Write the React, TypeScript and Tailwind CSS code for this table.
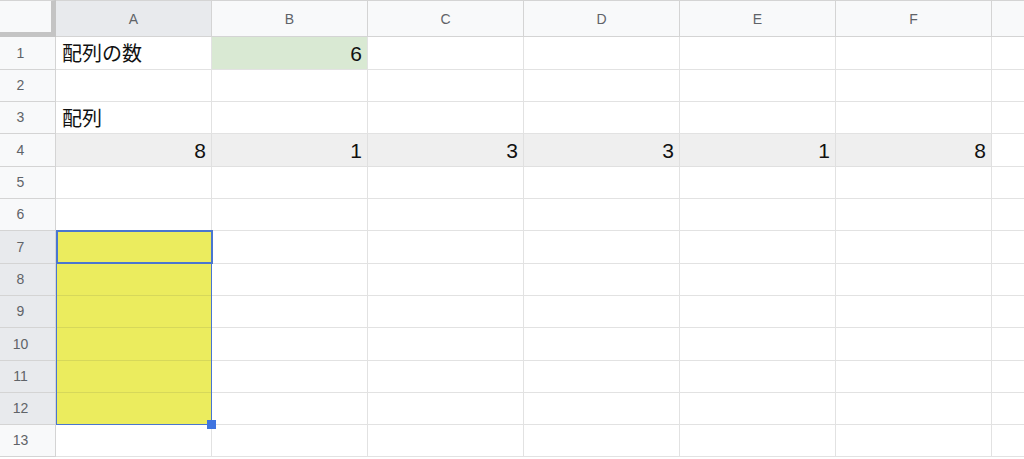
const COLS = ["A", "B", "C", "D", "E", "F"];

type Row = {
  n: number;
  h: string;
  cells: (string | null)[];
};

// row heights follow the gridlines of the sheet (33/32 px alternating)
const ROWS: Row[] = [
  { n: 1, h: "h-[33px]", cells: ["配列の数", "6", null, null, null, null] },
  { n: 2, h: "h-[32px]", cells: [null, null, null, null, null, null] },
  { n: 3, h: "h-[32px]", cells: ["配列", null, null, null, null, null] },
  { n: 4, h: "h-[33px]", cells: ["8", "1", "3", "3", "1", "8"] },
  { n: 5, h: "h-[32px]", cells: [null, null, null, null, null, null] },
  { n: 6, h: "h-[32px]", cells: [null, null, null, null, null, null] },
  { n: 7, h: "h-[33px]", cells: [null, null, null, null, null, null] },
  { n: 8, h: "h-[32px]", cells: [null, null, null, null, null, null] },
  { n: 9, h: "h-[32px]", cells: [null, null, null, null, null, null] },
  { n: 10, h: "h-[33px]", cells: [null, null, null, null, null, null] },
  { n: 11, h: "h-[32px]", cells: [null, null, null, null, null, null] },
  { n: 12, h: "h-[32px]", cells: [null, null, null, null, null, null] },
  { n: 13, h: "h-[32px]", cells: [null, null, null, null, null, null] },
];

const isNumber = (v: string) => /^\d+$/.test(v);

function cellBg(row: number, col: number) {
  if (row === 1 && col === 1) return "bg-[#d9e9d3] border-[#e2e2e2]";
  if (row === 4) return "bg-[#efefef] border-[#e0e0e0]";
  if (col === 0 && row >= 7 && row <= 12) return "bg-[#ebec5e] border-[#d6d85a]";
  return "bg-white border-[#e2e2e2]";
}

function Cell({ row, col, value }: { row: number; col: number; value: string | null }) {
  const num = value !== null && isNumber(value);
  return (
    <div
      className={`flex items-center overflow-hidden border-r border-b ${cellBg(row, col)} ${
        num ? "justify-end pr-[5px]" : "justify-start pl-[6px]"
      }`}
    >
      {value !== null &&
        (num ? (
          <span className="pt-[1px] text-[21px] leading-[22px] text-[#111]">{value}</span>
        ) : (
          <span className="font-['Noto_Sans_CJK_JP',sans-serif] text-[20px] leading-[22px] text-[#111]">
            {value}
          </span>
        ))}
    </div>
  );
}

export default function App() {
  return (
    <div className="relative h-[459px] w-[1024px] overflow-hidden bg-white font-['Liberation_Sans','Noto_Sans_CJK_JP',sans-serif]">
      <div className="grid grid-cols-[56px_repeat(6,156px)_1fr]">
        {/* header row */}
        <div className="h-[37px] border-t border-t-[#d4d4d4] border-r-[5px] border-b-[5px] border-r-[#c4c4c4] border-b-[#c4c4c4] bg-[#f8f9fa]" />
        {COLS.map((c) => (
          <div
            key={c}
            className={`flex h-[37px] items-center justify-center border-t border-r border-b border-[#d4d4d4] pt-[2px] text-[14px] text-[#5f6368] ${
              c === "A" ? "bg-[#e8eaed]" : "bg-[#f8f9fa]"
            }`}
          >
            {c}
          </div>
        ))}
        <div className="h-[37px] border-t border-b border-[#d4d4d4] bg-[#f8f9fa]" />

        {/* body rows */}
        {ROWS.map((r) => (
          <div key={r.n} className="contents">
            <div
              className={`flex ${r.h} items-center justify-center border-r border-b border-[#d4d4d4] pr-[14px] text-[14px] text-[#5f6368] ${
                r.n >= 7 && r.n <= 12 ? "bg-[#e8eaed]" : "bg-[#f8f9fa]"
              }`}
            >
              {r.n}
            </div>
            {r.cells.map((v, i) => (
              <Cell key={i} row={r.n} col={i} value={v} />
            ))}
            <div className={`${r.h} border-b border-[#e2e2e2] bg-white`} />
          </div>
        ))}
      </div>

      {/* selection A7:A12 */}
      <div className="pointer-events-none absolute left-[56px] top-[230px] h-[195px] w-[156px] border border-[#4a76cf]" />
      <div className="pointer-events-none absolute left-[56px] top-[230px] h-[34px] w-[157px] border-2 border-[#4a76cf]" />
      <div className="pointer-events-none absolute left-[207px] top-[420px] h-[9px] w-[9px] bg-[#3f74e0]" />
    </div>
  );
}
